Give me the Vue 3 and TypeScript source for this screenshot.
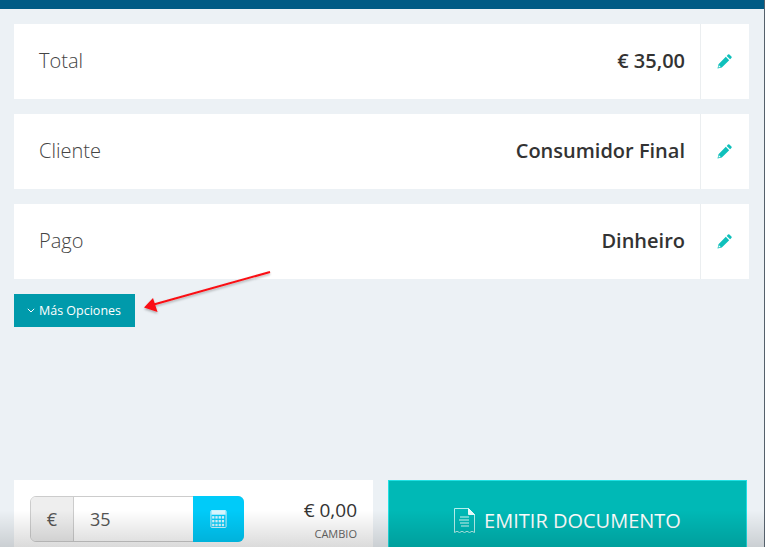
<template>
  <div class="page">
    <div class="topbar"></div>
    <div class="content">
      <div v-for="row in rows" :key="row.label" class="row">
        <span class="row-label">{{ row.label }}</span>
        <strong class="row-value">{{ row.value }}</strong>
        <button type="button" class="edit">
          <svg width="15" height="15" viewBox="0 0 15 15">
            <path fill="#0fc0bb" d="M11 .6a1 1 0 0 1 1.4 0l2 2a1 1 0 0 1 0 1.4l-1.3 1.3-3.4-3.4zM8.8 2.8l3.4 3.4-7.4 7.4-4.3 1 1-4.4z" />
            <path fill="#fff" d="M1.9 11.3l1.8 1.8-2.3.5z" />
          </svg>
        </button>
      </div>
      <button type="button" class="more">
        <svg width="8" height="5" viewBox="0 0 8 5"><path d="M.8.8 4 4l3.2-3.2" fill="none" stroke="#fff" stroke-width="1" /></svg>
        Más Opciones
      </button>
      <svg class="arrow" width="140" height="52" viewBox="0 0 140 52">
        <defs>
          <filter id="arrow-shadow" x="-10%" y="-20%" width="120%" height="160%">
            <feDropShadow dx="0" dy="1.5" stdDeviation="1" flood-color="#000" flood-opacity="0.3" />
          </filter>
        </defs>
        <g filter="url(#arrow-shadow)">
          <path d="M128 3 10 36" stroke="#fa0f12" stroke-width="2" fill="none" />
          <path d="M2 38.5 11 29l4.500 14z" fill="#fa0f12" />
        </g>
      </svg>
    </div>
    <div class="footer">
      <div class="payment">
        <div class="amount-group">
          <span class="currency">€</span>
          <span class="amount">35</span>
          <button type="button" class="calc">
            <svg width="17" height="18" viewBox="0 0 17 19">
              <rect x="0.5" y="0.5" width="16" height="18" rx="1" fill="none" stroke="#d8f6ff" />
              <rect x="1" y="1" width="15" height="4" fill="#d8f6ff" />
              <g fill="#d8f6ff">
                <template v-for="r in 3" :key="r">
                  <rect v-for="c in 4" :key="c" :x="c * 3.4 - 1.6" :y="r * 4 + 2.5" width="2.4" height="2.6" />
                </template>
              </g>
            </svg>
          </button>
        </div>
        <div class="change">
          <span class="change-value">€ 0,00</span>
          <span class="change-label">CAMBIO</span>
        </div>
      </div>
      <button type="button" class="emit">
        <svg width="21" height="26" viewBox="0 0 21 26">
          <path d="M.5.5h14l6 6v18l-2.500-1.200-2.500 1.200-2.500-1.200-2.500 1.200-2.500-1.200-2.500 1.200-2.500-1.200L.5 24.500z" fill="none" stroke="#b5efec" />
          <path d="M14.500.5v6h6z" fill="#e6fbfa" stroke="#e6fbfa" />
          <path d="M6 9h9M5 12h10M6 15h9M7 18h8" stroke="#8fe4df" stroke-width="1.300" />
        </svg>
        EMITIR DOCUMENTO
      </button>
    </div>
    <div class="bottom-shade"></div>
  </div>
</template>

<script setup lang="ts">
const rows: { label: string; value: string }[] = [
  { label: 'Total', value: '€ 35,00' },
  { label: 'Cliente', value: 'Consumidor Final' },
  { label: 'Pago', value: 'Dinheiro' },
];
</script>

<style>
html, body { margin: 0; overflow: hidden; }
</style>

<style scoped>
.page {
  position: relative;
  width: 765px;
  height: 547px;
  box-sizing: border-box;
  border-right: 1px solid #55606b;
  overflow: hidden;
  display: flex;
  flex-direction: column;
  background: #ecf1f5;
  font-family: "Open Sans", sans-serif;
  color: #333;
}
.topbar {
  height: 9px;
  background: #005b85;
}
.content {
  position: relative;
  flex: 1;
  padding: 15px 15px 0 14px;
  display: flex;
  flex-direction: column;
  align-items: flex-start;
  gap: 15px;
}
.row {
  align-self: stretch;
  height: 75px;
  display: flex;
  align-items: center;
  background: #fff;
}
.row-label {
  flex: 1;
  padding: 0 0 2px 25px;
  font-size: 20px;
  font-weight: 300;
  color: #444;
}
.row-value {
  padding: 0 15px 2px 0;
  font-size: 20px;
  font-weight: 600;
  color: #333;
}
.edit {
  width: 49px;
  height: 100%;
  padding: 0 1px 0 0;
  border: none;
  border-left: 1px solid #ebeef0;
  background: none;
  display: flex;
  align-items: center;
  justify-content: center;
}
.more {
  width: 121px;
  height: 33px;
  padding: 0 1px 0 0;
  border: none;
  background: #009aab;
  color: #fff;
  font-family: "Open Sans", sans-serif;
  font-size: 12.500px;
  display: flex;
  align-items: center;
  justify-content: center;
  gap: 4px;
}
.arrow {
  position: absolute;
  left: 142px;
  top: 260px;
}
.footer {
  height: 67px;
  padding: 0 17px 0 14px;
  display: flex;
  gap: 15px;
}
.payment {
  width: 359px;
  box-sizing: border-box;
  padding: 16px 16px 0;
  background: #fff;
  display: flex;
  justify-content: space-between;
}
.amount-group {
  width: 214px;
  height: 46px;
  box-sizing: border-box;
  display: flex;
  border: 1px solid #ccc;
  border-radius: 6px;
}
.currency {
  width: 43px;
  box-sizing: border-box;
  background: #eee;
  border-right: 1px solid #ccc;
  border-radius: 5px 0 0 5px;
  display: flex;
  align-items: center;
  justify-content: center;
  font-size: 18px;
  color: #555;
}
.amount {
  flex: 1;
  padding-left: 16px;
  font-size: 18px;
  line-height: 44px;
  color: #555;
}
.calc {
  width: 51px;
  margin: -1px -1px -1px 0;
  padding: 0 1px 0 0;
  border: none;
  border-radius: 0 6px 6px 0;
  background: #00cbf9;
  display: flex;
  align-items: center;
  justify-content: center;
}
.change {
  display: flex;
  flex-direction: column;
  align-items: flex-end;
}
.change-value {
  font-size: 19px;
  line-height: 28px;
  color: #333;
}
.change-label {
  font-size: 11px;
  line-height: 20px;
  color: #666;
}
.emit {
  width: 359px;
  box-sizing: border-box;
  padding: 13px 0 0;
  border: 1px solid #20e0e4;
  border-bottom: none;
  background: #00b9b6;
  color: #fff;
  font-family: "Open Sans", sans-serif;
  font-size: 20px;
  display: flex;
  align-items: center;
  justify-content: center;
  gap: 9px;
}
.bottom-shade {
  position: absolute;
  left: 0;
  right: 0;
  bottom: 0;
  height: 37px;
  background: linear-gradient(to bottom, rgba(0, 0, 0, 0), rgba(0, 0, 0, 0.14));
  pointer-events: none;
}
</style>
